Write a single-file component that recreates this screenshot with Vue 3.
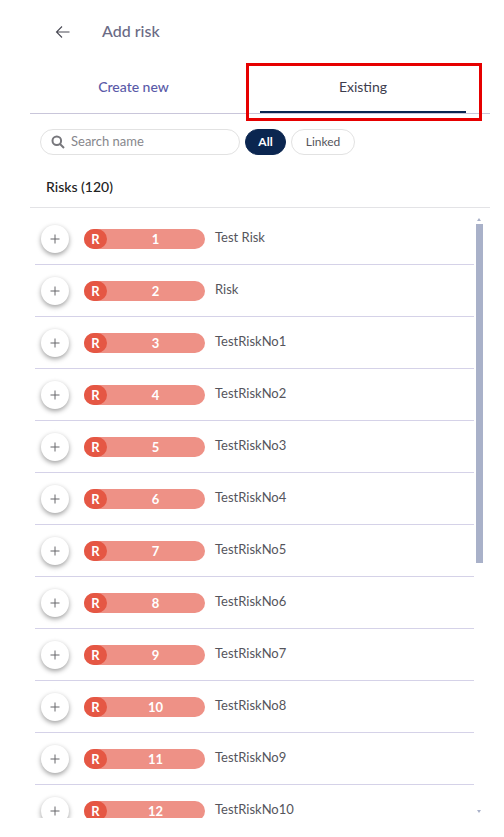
<script setup>
const names = ['Test Risk','Risk','TestRiskNo1','TestRiskNo2','TestRiskNo3','TestRiskNo4','TestRiskNo5','TestRiskNo6','TestRiskNo7','TestRiskNo8','TestRiskNo9','TestRiskNo10']
</script>

<template>
  <div class="page">
    <header class="head">
      <svg class="back" width="16" height="14" viewBox="0 0 16 14" fill="none" stroke="#4a4a55" stroke-width="1.1">
        <path d="M1.5 7H14.5M7 1.5L1.5 7L7 12.5" />
      </svg>
      <span class="title">Add risk</span>
    </header>
    <nav class="tabs">
      <div class="tab create">Create new</div>
      <div class="tab existing">Existing</div>
      <div class="callout"></div>
    </nav>
    <div class="filters">
      <div class="search">
        <svg width="14" height="14" viewBox="0 0 14 14" fill="none" stroke="#77777c" stroke-width="2">
          <circle cx="5.8" cy="5.8" r="4.3" /><path d="M9 9L13 13" />
        </svg>
        <span>Search name</span>
      </div>
      <div class="chip on">All</div>
      <div class="chip">Linked</div>
    </div>
    <div class="count">Risks (120)</div>
    <div class="body">
      <ul class="list">
        <li v-for="(n, i) in names" :key="i" class="row">
          <div class="add">
            <svg width="10" height="10" viewBox="0 0 10 10" stroke="#66666b" stroke-width="1"><path d="M5 0.5V9.5M0.5 5H9.5" /></svg>
          </div>
          <div class="pill"><span class="r">R</span><span class="num">{{ i + 1 }}</span></div>
          <span class="name">{{ n }}</span>
        </li>
      </ul>
      <div class="scroll">
        <i class="up"></i>
        <i class="thumb"></i>
        <i class="down"></i>
      </div>
    </div>
  </div>
</template>

<style>
html, body { background: #fff; }
</style>

<style scoped>
.page {
  width: 460px;
  height: 837px;
  margin-left: 30px;
  font-family: Lato, "Open Sans", sans-serif;
  overflow: hidden;
}
.head {
  height: 64px;
  display: flex;
  align-items: center;
  padding-left: 25px;
  box-sizing: border-box;
}
.title { margin-left: 31px; margin-top: -3px; font-size: 16px; font-weight: 500; color: #6b6b85; }
.back { display: block; }
.tabs {
  position: relative;
  height: 49px;
  display: flex;
  border-bottom: 1px solid #c9c6da;
}
.tab { display: flex; align-items: center; justify-content: center; font-size: 14px; padding-bottom: 4px; box-sizing: border-box; }
.create { width: 207px; color: #5a5aa8; font-weight: 500; }
.existing { width: 206px; margin-left: 23px; color: #3d3d4e; border-bottom: 2px solid #0b2650; padding-bottom: 2px; }
.callout {
  position: absolute;
  left: 216px;
  top: -1px;
  width: 236px;
  height: 58px;
  border: 3px solid #e60000;
  box-sizing: border-box;
}
.filters { display: flex; align-items: center; margin-top: 15px; padding-left: 10px; }
.search {
  width: 200px;
  height: 26px;
  box-sizing: border-box;
  border: 1px solid #e2e2e2;
  border-radius: 13px;
  display: flex;
  align-items: center;
  padding-left: 10px;
  font-size: 13px;
  color: #87878c;
}
.search span { margin-left: 6px; margin-top: -2px; }
.chip {
  height: 26px;
  box-sizing: border-box;
  margin-left: 5px;
  width: 64px;
  justify-content: center;
  border: 1px solid #e2e2e2;
  border-radius: 13px;
  display: flex;
  align-items: center;
  padding-bottom: 2px;
  font-size: 12px;
  color: #55555c;
}
.chip.on { width: 41px; background: #0b2650; border-color: #0b2650; color: #fff; font-weight: 700; }
.count {
  height: 53px;
  padding-left: 16px;
  padding-top: 11px;
  display: flex;
  align-items: center;
  font-size: 14px;
  font-weight: 500;
  color: #222;
  border-bottom: 1px solid #e3e3e6;
  box-sizing: border-box;
}
.body { display: flex; height: 610px; overflow: hidden; }
.list { list-style: none; margin: 5px 0 0 5px; padding: 0; width: 439px; flex: none; overflow: hidden; }
.row {
  height: 52px;
  box-sizing: border-box;
  display: flex;
  align-items: center;
  padding-left: 6px;
  border-bottom: 1px solid #d5d2e8;
}
.add {
  width: 28px;
  height: 28px;
  border-radius: 50%;
  background: #fff;
  box-shadow: 0 2px 5px rgba(0,0,0,.38);
  display: flex;
  align-items: center;
  justify-content: center;
  flex: none;
}
.add svg { display: block; }
.pill {
  margin-left: 15px;
  width: 121px;
  height: 20px;
  border-radius: 10px;
  background: #ee9186;
  display: flex;
  align-items: center;
  flex: none;
}
.r {
  width: 23px;
  height: 20px;
  border-radius: 10px;
  background: #e55744;
  color: #fff;
  font-size: 13px;
  font-weight: 700;
  display: flex;
  align-items: center;
  justify-content: center;
}
.num { flex: 1; text-align: center; color: #fff; font-size: 13px; font-weight: 700; margin-left: -1px; }
.name { margin-left: 10px; margin-top: -4px; font-size: 13px; color: #55555c; }
.scroll { width: 7px; margin-left: 2px; height: 610px; position: relative; }
.up, .down { position: absolute; left: 1px; width: 0; height: 0; border-left: 2.5px solid transparent; border-right: 2.5px solid transparent; }
.up { top: 10px; border-bottom: 3px solid #a9b1c9; }
.down { top: 602px; border-top: 3px solid #a9b1c9; }
.thumb { display: block; width: 7px; height: 339px; margin-top: 16px; background: #a9b1c9; }
</style>
